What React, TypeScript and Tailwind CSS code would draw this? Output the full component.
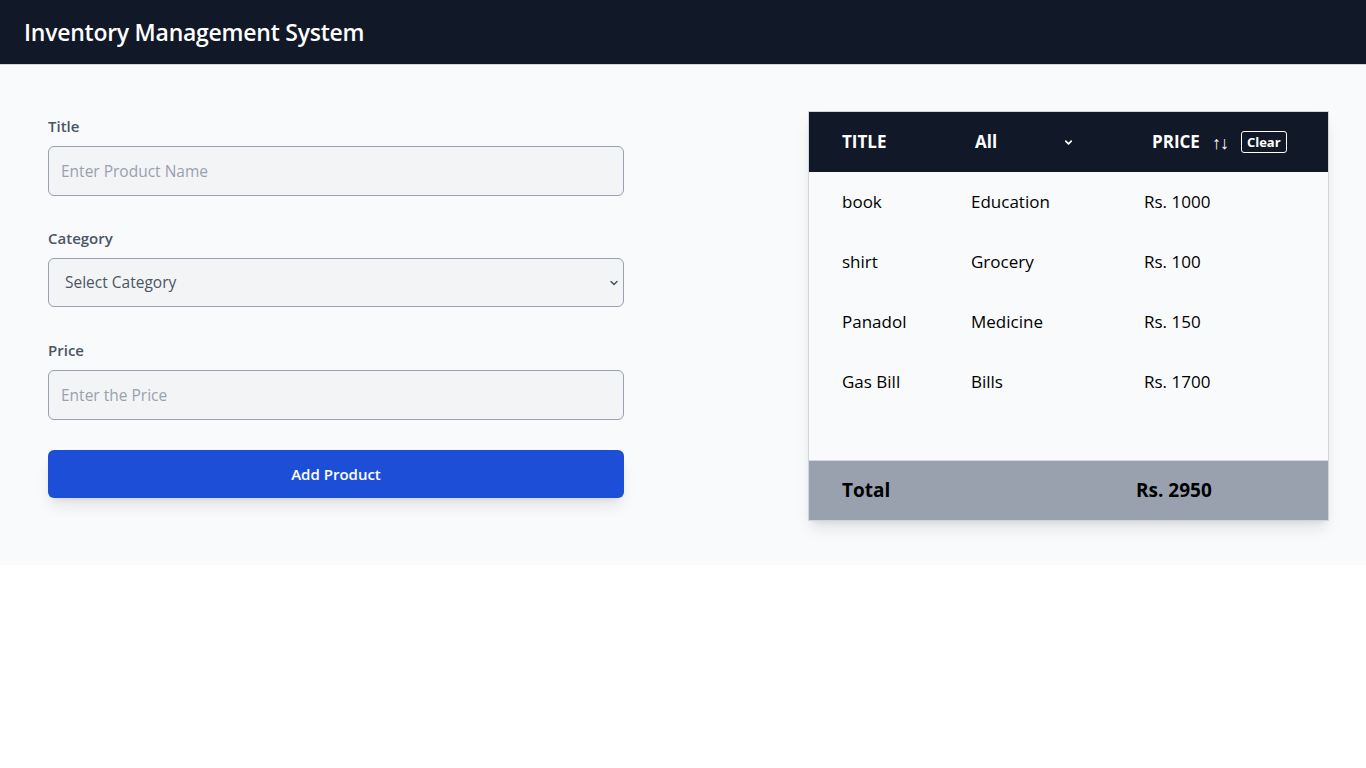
import { ChevronDown } from 'lucide-react'

const PRODUCTS = [
  { title: 'book', category: 'Education', price: 1000 },
  { title: 'shirt', category: 'Grocery', price: 100 },
  { title: 'Panadol', category: 'Medicine', price: 150 },
  { title: 'Gas Bill', category: 'Bills', price: 1700 },
]

const font = { fontFamily: '"Open Sans", "Noto Sans", sans-serif' }

function Field({ label, children }: { label: string; children: React.ReactNode }) {
  return (
    <div className="flex flex-col">
      <label className="text-[15px] leading-5 font-semibold text-gray-600 mb-[10px]">{label}</label>
      {children}
    </div>
  )
}

export default function App() {
  const total = PRODUCTS.reduce((s, p) => s + p.price, 0)

  return (
    <div className="min-h-[768px] bg-white" style={font}>
      {/* Top bar */}
      <header className="h-[65px] bg-[#111827] border-b border-gray-300 flex items-center px-6">
        <h1 className="text-[23px] font-semibold text-white tracking-[-0.25px]">Inventory Management System</h1>
      </header>

      <main className="bg-gray-50 flex justify-between pl-12 pr-[37px] pt-[46px] pb-[44px]">
        {/* Form */}
        <form className="w-[576px] pt-[5px] flex flex-col gap-8" onSubmit={(e) => e.preventDefault()}>
          <Field label="Title">
            <input
              placeholder="Enter Product Name"
              className="h-[50px] w-full rounded-md border border-gray-400 bg-gray-100 px-3 text-[15.5px] font-medium text-gray-700 placeholder:text-gray-400 outline-none"
            />
          </Field>
          <Field label="Category">
            <div className="relative">
              <select
                defaultValue=""
                className="h-[49px] w-full appearance-none rounded-md border border-gray-400 bg-gray-100 px-4 text-[15.5px] font-medium text-gray-600 outline-none"
              >
                <option value="" disabled>Select Category</option>
                <option>Education</option>
                <option>Grocery</option>
                <option>Medicine</option>
                <option>Bills</option>
              </select>
              <ChevronDown size={12} strokeWidth={3} className="absolute right-[4px] top-[19px] text-gray-600 pointer-events-none" />
            </div>
          </Field>
          <div className="mt-px">
            <Field label="Price">
              <input
                placeholder="Enter the Price"
                className="h-[50px] w-full rounded-md border border-gray-400 bg-gray-100 px-3 text-[15.5px] font-medium text-gray-700 placeholder:text-gray-400 outline-none"
              />
            </Field>
          </div>
          <button className="mt-[-2px] h-[48px] w-full rounded-md bg-[#1d4ed8] text-[15px] font-semibold text-white shadow-lg">
            Add Product
          </button>
        </form>

        {/* Table */}
        <div className="w-[521px] border border-gray-300 shadow-lg flex flex-col">
          <div className="h-[60px] bg-[#111827] grid grid-cols-[129px_173px_1fr] items-center px-[33px] text-white font-bold text-[17px]">
            <span>TITLE</span>
            <div className="relative flex items-center pl-1 w-[105px]">
              <span>All</span>
              <ChevronDown size={11} strokeWidth={3.5} className="absolute right-[2px] top-[8px]" />
            </div>
            <div className="flex items-center pl-2">
              <span>PRICE</span>
              <span className="ml-3 text-[18px] leading-5 font-normal tracking-[-1px]">↑↓</span>
              <span className="ml-[13px] border border-white rounded-[3px] px-[5px] text-[13px] leading-5 font-bold">Clear</span>
            </div>
          </div>
          <div className="h-[288px] bg-gray-50">
            {PRODUCTS.map((p) => (
              <div key={p.title} className="h-[60px] grid grid-cols-[129px_173px_1fr] items-center px-[33px] text-[17px] text-black">
                <span>{p.title}</span>
                <span>{p.category}</span>
                <span>Rs. {p.price}</span>
              </div>
            ))}
          </div>
          <div className="h-[60px] bg-gray-400 border-t border-gray-300 grid grid-cols-[294px_1fr] items-center px-[33px] text-[19px] font-bold text-black">
            <span>Total</span>
            <span>Rs. {total}</span>
          </div>
        </div>
      </main>
    </div>
  )
}
